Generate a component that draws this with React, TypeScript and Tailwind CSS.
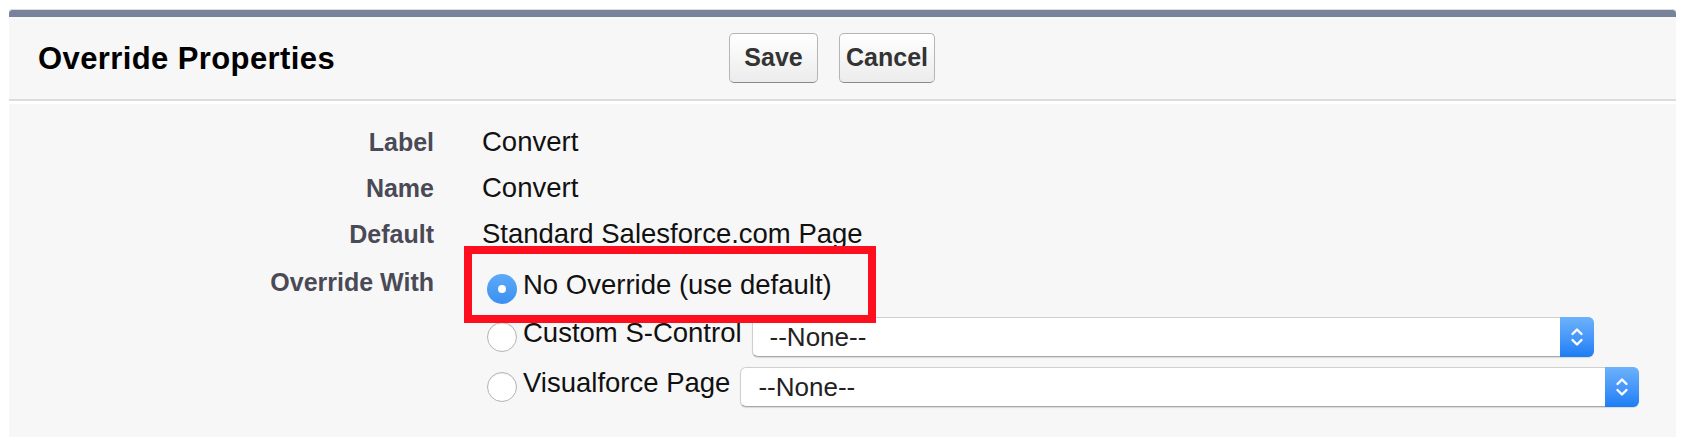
import React, { useState } from 'react';

const Chevrons: React.FC = () => (
  <svg width="14" height="22" viewBox="0 0 14 22" fill="none">
    <path d="M2.5 8 L7 3.5 L11.5 8" stroke="white" strokeWidth="2.4" strokeLinecap="round" strokeLinejoin="round" />
    <path d="M2.5 14 L7 18.5 L11.5 14" stroke="white" strokeWidth="2.4" strokeLinecap="round" strokeLinejoin="round" />
  </svg>
);

const Select: React.FC<{ width: string }> = ({ width }) => (
  <div
    className={`${width} h-[40px] flex rounded-[6px] bg-white border border-[#cfcfcf] border-b-[#a8a8a8] shadow-[0_1px_1px_rgba(0,0,0,0.12)]`}
  >
    <div className="flex-1 flex items-center pl-[17px] text-[26px] text-[#222]">--None--</div>
    <div className="w-[34px] -my-px -mr-px flex items-center justify-center rounded-r-[6px] bg-gradient-to-b from-[#6cb2fb] to-[#1c7df5]">
      <Chevrons />
    </div>
  </div>
);

const Radio: React.FC<{ checked: boolean; onClick: () => void }> = ({ checked, onClick }) =>
  checked ? (
    <button
      onClick={onClick}
      className="ml-[5px] w-[30px] h-[30px] shrink-0 rounded-full bg-gradient-to-b from-[#5eaaf9] to-[#3a8ff2] flex items-center justify-center"
    >
      <span className="w-[8px] h-[8px] rounded-full bg-white" />
    </button>
  ) : (
    <button
      onClick={onClick}
      className="ml-[5px] w-[30px] h-[30px] shrink-0 rounded-full bg-white border border-[#b4b4b4] shadow-[inset_0_1px_1px_rgba(0,0,0,0.08)]"
    />
  );

const fields = [
  { label: 'Label', value: 'Convert' },
  { label: 'Name', value: 'Convert' },
  { label: 'Default', value: 'Standard Salesforce.com Page' },
];

const App: React.FC = () => {
  const [choice, setChoice] = useState('none');

  return (
    <div className="min-h-screen bg-white pt-[9px] pl-[9px] font-['Liberation_Sans',Arial,sans-serif]">
      <div className="w-[1667px] h-[428px] flex flex-col bg-[#f7f7f7] overflow-hidden">
        {/* header */}
        <div className="border-t border-[#d9dce3] h-[8px] bg-[#78839b] rounded-t-[4px]" />
        <div className="h-[84px] flex items-center pl-[29px] border-b-2 border-[#dcdcdc]">
          <div className="w-[691px] shrink-0">
            <h2 className="text-[31px] tracking-[0.4px] font-bold text-black leading-none">Override Properties</h2>
          </div>
          <div className="flex gap-[21px]">
            {['Save', 'Cancel'].map((b) => (
              <button
                key={b}
                className={`${b === 'Save' ? 'w-[89px]' : 'w-[96px]'} h-[50px] rounded-[5px] border border-[#b5b5b5] border-b-[#8a8a8a] bg-gradient-to-b from-white to-[#ececec] text-[25px] font-bold text-[#333]`}
              >
                {b}
              </button>
            ))}
          </div>
        </div>

        {/* body */}
        <div className="flex-1 border-t-[3px] border-white pt-[15px]">
          {fields.map((f) => (
            <div key={f.label} className="flex items-baseline h-[46px]">
              <div className="w-[425px] shrink-0 text-right text-[25px] font-bold text-[#4a4a56]">{f.label}</div>
              <div className="ml-[48px] text-[27.5px] leading-[46px] text-[#111]">{f.value}</div>
            </div>
          ))}

          <div className="flex mt-2">
            <div className="w-[425px] shrink-0 text-right text-[25px] font-bold text-[#4a4a56] leading-[34px]">
              Override With
            </div>
            <div className="ml-[48px] flex flex-col text-[27.5px] text-[#111]">
              <div className="relative h-12 flex items-center">
                <Radio checked={choice === 'none'} onClick={() => setChoice('none')} />
                <span className="ml-[6px] pb-2 leading-none">No Override (use default)</span>
                <div className="absolute left-[-18px] top-[-19px] w-[412px] h-[77px] border-[8px] border-[#fe0f1f] pointer-events-none" />
              </div>
              <div className="h-12 flex items-center">
                <Radio checked={choice === 'scontrol'} onClick={() => setChoice('scontrol')} />
                <span className="ml-[6px] pb-2 leading-none">Custom S-Control</span>
                <div className="ml-[10px]">
                  <Select width="w-[842px]" />
                </div>
              </div>
              <div className="h-12 mt-[2px] flex items-center">
                <Radio checked={choice === 'vf'} onClick={() => setChoice('vf')} />
                <span className="ml-[6px] pb-2 leading-none">Visualforce Page</span>
                <div className="ml-[10px]">
                  <Select width="w-[899px]" />
                </div>
              </div>
            </div>
          </div>
        </div>
      </div>
    </div>
  );
};

export default App;
